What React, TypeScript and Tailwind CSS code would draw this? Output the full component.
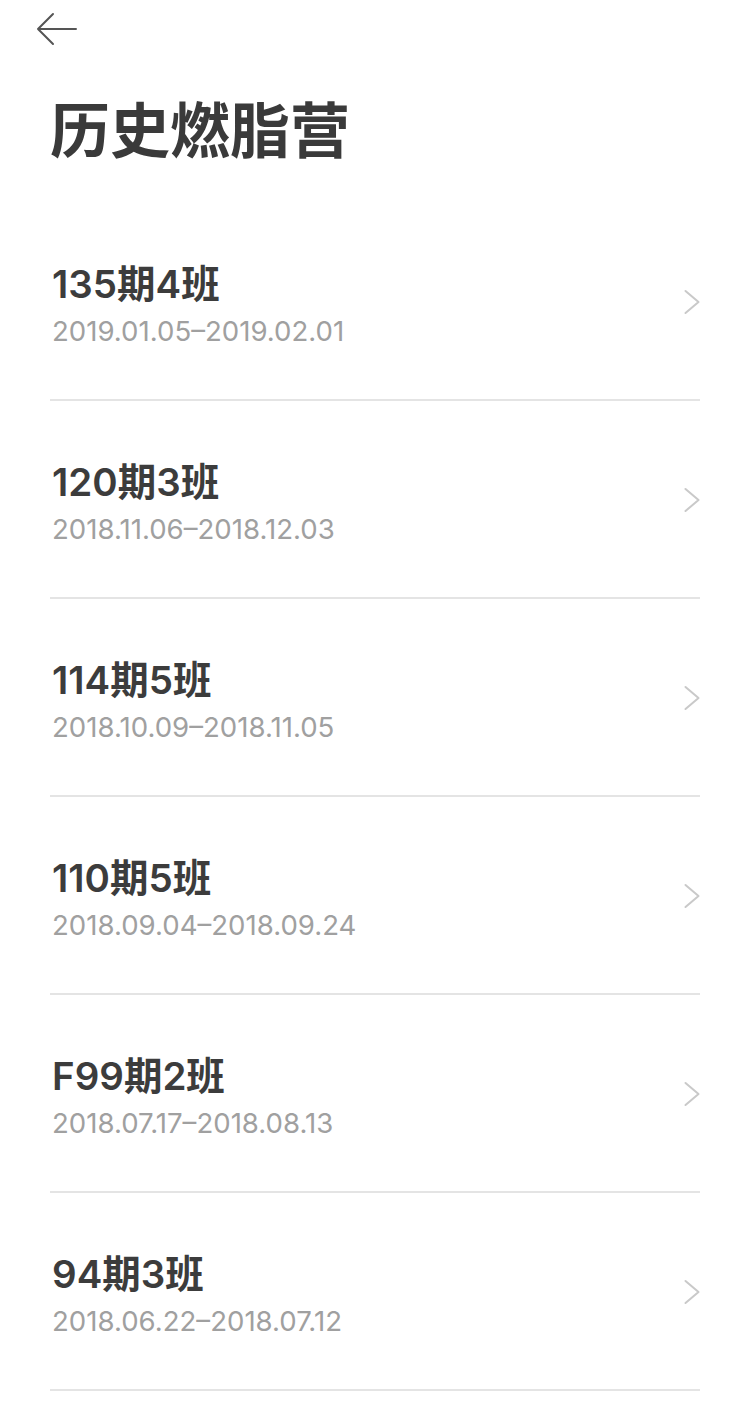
import { memo } from "react";

const camps = [
  { name: "135期4班", range: "2019.01.05–2019.02.01" },
  { name: "120期3班", range: "2018.11.06–2018.12.03" },
  { name: "114期5班", range: "2018.10.09–2018.11.05" },
  { name: "110期5班", range: "2018.09.04–2018.09.24" },
  { name: "F99期2班", range: "2018.07.17–2018.08.13" },
  { name: "94期3班", range: "2018.06.22–2018.07.12" },
];

const BackArrow = () => (
  <svg width="42" height="34" viewBox="0 0 42 34" fill="none">
    <path d="M2 17H40M17 2L2 17L17 32" stroke="#555" strokeWidth="2" strokeLinecap="round" strokeLinejoin="round" />
  </svg>
);

const Chevron = () => (
  <svg width="18" height="26" viewBox="0 0 18 26" fill="none">
    <path d="M3.5 2L16.5 13L3.5 24" stroke="#c9c9c9" strokeWidth="2" strokeLinecap="round" strokeLinejoin="round" />
  </svg>
);

// one finished camp: name, dates, chevron
const CampRow = memo(function CampRow({ name, range }: { name: string; range: string }) {
  return (
    <div className="h-[198px] border-b-2 border-[#e4e4e4] flex items-start justify-between">
      <div className="pt-[61px] pl-[2px]">
        <div className="text-[38.5px] leading-[40px] font-semibold text-[#3c3c3c]">{name}</div>
        <div className="mt-[12px] text-[27.6px] leading-[30px] text-[#a0a0a0]">{range}</div>
      </div>
      <div className="pt-[86px]">
        <Chevron />
      </div>
    </div>
  );
});

export default function App() {
  return (
    <div
      className="w-[750px] min-h-[1408px] bg-white"
      style={{ fontFamily: 'Inter, "Noto Sans CJK SC", sans-serif' }}
    >
      <div className="h-[58px] pl-[36px] flex items-center">
        <BackArrow />
      </div>
      <div className="h-[145px] pl-[50px] flex items-center">
        <h1 className="text-[60px] leading-none font-bold text-[#3a3a3a]">历史燃脂营</h1>
      </div>
      <div className="mx-[50px]">
        {camps.map((c) => (
          <CampRow key={c.name} name={c.name} range={c.range} />
        ))}
      </div>
    </div>
  );
}
